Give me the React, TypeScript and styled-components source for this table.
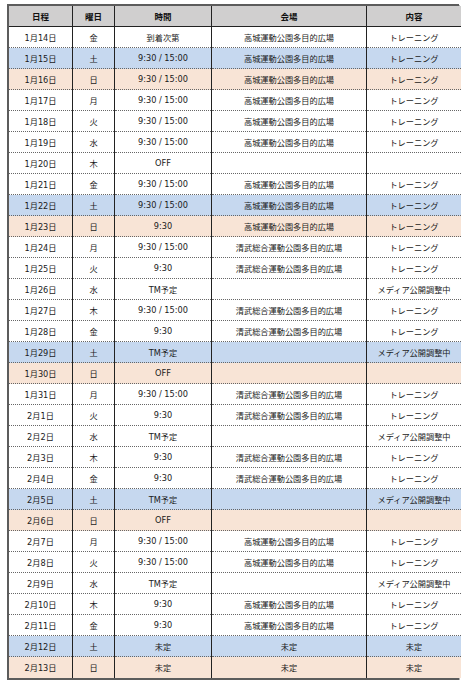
import React from 'react';
import styled, { createGlobalStyle } from 'styled-components';

const GlobalStyle = createGlobalStyle`
  html, body {
    margin: 0;
    padding: 0;
    background: #ffffff;
  }
`;

type Tone = 'plain' | 'sat' | 'sun';

const toneColor: Record<Tone, string> = {
  plain: '#ffffff',
  sat: '#c6d8ef',
  sun: '#f8e4d6'
};

const Page = styled.div`
  padding: 4px 0 0 7px;
  font-family: 'DejaVu Sans', Verdana, 'Noto Sans CJK JP', sans-serif;
`;

const Frame = styled.div`
  box-sizing: border-box;
  width: 452px;
  border: 2px solid #5c5c5c;
  box-shadow: 1px 1px 0 #b4b4b4;
`;

const Table = styled.table`
  width: 100%;
  table-layout: fixed;
  border-collapse: collapse;
`;

const HeadCell = styled.th<{ w: number }>`
  width: ${props => props.w}px;
  height: 20px;
  padding: 0;
  background: #d0cfcf;
  color: #111;
  font-size: 8.5px;
  font-weight: bold;
  text-align: center;
  border-left: 1px solid #222;
  border-bottom: 1px solid #222;

  &:first-child {
    border-left: none;
  }
`;

const Row = styled.tr<{ tone: Tone }>`
  height: 21px;
  background: ${props => toneColor[props.tone]};
  border-top: 1px dotted #666;

  &:first-child {
    border-top: none;
  }
`;

const Cell = styled.td`
  padding: 0;
  color: #1a1a1a;
  font-size: 8.2px;
  text-align: center;
  white-space: nowrap;
  border-left: 1px solid #222;

  &:first-child {
    border-left: none;
  }
`;

const TAKAJO = '高城運動公園多目的広場';
const KIYOTAKE = '清武総合運動公園多目的広場';
const TRAIN = 'トレーニング';
const MEDIA = 'メディア公開調整中';
const FULL = '9:30 / 15:00';

const days: [string, string, string, string, string][] = [
  ['1月14日', '金', '到着次第', TAKAJO, TRAIN],
  ['1月15日', '土', FULL, TAKAJO, TRAIN],
  ['1月16日', '日', FULL, TAKAJO, TRAIN],
  ['1月17日', '月', FULL, TAKAJO, TRAIN],
  ['1月18日', '火', FULL, TAKAJO, TRAIN],
  ['1月19日', '水', FULL, TAKAJO, TRAIN],
  ['1月20日', '木', 'OFF', '', ''],
  ['1月21日', '金', FULL, TAKAJO, TRAIN],
  ['1月22日', '土', FULL, TAKAJO, TRAIN],
  ['1月23日', '日', '9:30', TAKAJO, TRAIN],
  ['1月24日', '月', FULL, KIYOTAKE, TRAIN],
  ['1月25日', '火', '9:30', KIYOTAKE, TRAIN],
  ['1月26日', '水', 'TM予定', '', MEDIA],
  ['1月27日', '木', FULL, KIYOTAKE, TRAIN],
  ['1月28日', '金', '9:30', KIYOTAKE, TRAIN],
  ['1月29日', '土', 'TM予定', '', MEDIA],
  ['1月30日', '日', 'OFF', '', ''],
  ['1月31日', '月', FULL, KIYOTAKE, TRAIN],
  ['2月1日', '火', '9:30', KIYOTAKE, TRAIN],
  ['2月2日', '水', 'TM予定', '', MEDIA],
  ['2月3日', '木', '9:30', KIYOTAKE, TRAIN],
  ['2月4日', '金', '9:30', KIYOTAKE, TRAIN],
  ['2月5日', '土', 'TM予定', '', MEDIA],
  ['2月6日', '日', 'OFF', '', ''],
  ['2月7日', '月', FULL, TAKAJO, TRAIN],
  ['2月8日', '火', FULL, TAKAJO, TRAIN],
  ['2月9日', '水', 'TM予定', '', MEDIA],
  ['2月10日', '木', '9:30', TAKAJO, TRAIN],
  ['2月11日', '金', '9:30', TAKAJO, TRAIN],
  ['2月12日', '土', '未定', '未定', '未定'],
  ['2月13日', '日', '未定', '未定', '未定']
];

const columns: [string, number][] = [
  ['日程', 63],
  ['曜日', 41],
  ['時間', 96],
  ['会場', 154],
  ['内容', 94]
];

const toneOf = (weekday: string): Tone =>
  weekday === '土' ? 'sat' : weekday === '日' ? 'sun' : 'plain';

const App = () => {
  return (
    <Page>
      <GlobalStyle />
      <Frame>
        <Table>
          <thead>
            <tr>
              {columns.map(([label, w]) => (
                <HeadCell key={label} w={w}>
                  {label}
                </HeadCell>
              ))}
            </tr>
          </thead>
          <tbody>
            {days.map(day => (
              <Row key={day[0]} tone={toneOf(day[1])}>
                {day.map((text, i) => (
                  <Cell key={i}>{text}</Cell>
                ))}
              </Row>
            ))}
          </tbody>
        </Table>
      </Frame>
    </Page>
  );
};

export default App;
